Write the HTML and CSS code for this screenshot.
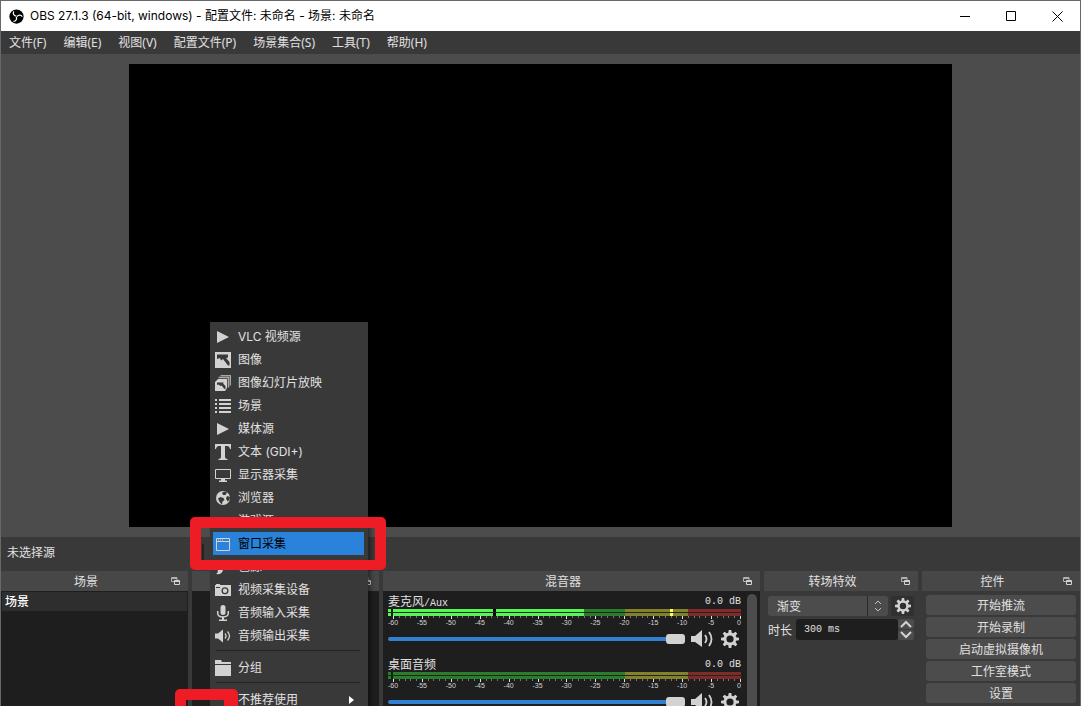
FILE: index.html
```html
<!DOCTYPE html>
<html lang="zh-CN">
<head>
<meta charset="utf-8">
<title>OBS 27.1.3</title>
<link rel="stylesheet" href="styles.css">
</head>
<body>
<svg class="defs" aria-hidden="true">
  <symbol id="i-float" viewBox="0 0 9 9"><path d="M.5.5h5.500v4h-5.500z M.5 1.500h5.500" fill="none" stroke="#b0b0b0"/><path d="M3.500 3.500h5v4h-5z" fill="#474747" stroke="#d2d2d2"/><path d="M3.500 4.500h5" stroke="#d2d2d2"/></symbol>
  <symbol id="i-play" viewBox="0 0 16 16"><path d="M2 2 14 8 2 14z"/></symbol>
  <symbol id="i-image" viewBox="0 0 16 16"><path fill-rule="evenodd" d="M0 0h16v16H0zM2 2.500V7l3-1 1 2.500 2-1.500 5 6.500h1.500V10L11 6l2-.5V2.500z"/></symbol>
  <symbol id="i-slides" viewBox="0 0 16 16"><path d="M5.500.5h10v10M3.500 2.500h10v10" fill="none" stroke="#a8a8a8" stroke-width="1.500"/><path fill-rule="evenodd" d="M3 4h9v9l-2 3H0V7zM2 7.500V10l2-.5 1 1.500 1.500-.5 3 3.500h1V11L8 8.500l1-1z"/></symbol>
  <symbol id="i-list" viewBox="0 0 16 16"><path d="M0 1h2v2H0zM4 1h12v2H4zM0 5h2v2H0zM4 5h12v2H4zM0 9h2v2H0zM4 9h12v2H4zM0 13h2v2H0zM4 13h12v2H4z"/></symbol>
  <symbol id="i-text" viewBox="0 0 16 16"><path d="M0 0h16v5h-1q-.5-3-3-3h-2v11q0 2 2.500 2v1h-9v-1Q6 15 6 13V2H4Q1.500 2 1 5H0z"/></symbol>
  <symbol id="i-monitor" viewBox="0 0 16 16"><path d="M.5 2.500h15v9H.5z" fill="none" stroke="#d2d2d2"/><path d="M6 12h4v1.500h2V15H4v-1.500h2z"/></symbol>
  <symbol id="i-globe" viewBox="0 0 16 16"><circle cx="8" cy="8" r="7"/><path d="m7 2.500 3-1 2 1-1.500 2.500L8 5zM5.500 7l3 1 1 2-2 1.500L7 14.500 4.500 12 3 8.500zM12 6l3 1-.5 3-2 1.500-1.500-3z" fill="#3a393a"/></symbol>
  <symbol id="i-game" viewBox="0 0 16 16"><path d="M4 6h8q3 0 3 5t-4 1H5q-4 4-4-1t3-5z"/></symbol>
  <symbol id="i-window" viewBox="0 0 16 16"><path d="M1.500 2.500h13v12h-13zM1.500 5.500h13" fill="none" stroke="#d2d2d2"/><path d="M3 4h1M5 4h1M7 4h1" stroke="#d2d2d2"/></symbol>
  <symbol id="i-brush" viewBox="0 0 16 16"><path d="m15 1-9 7 2 2zM5 9l3 2q-1 5-7 4 2-1 2-4z"/></symbol>
  <symbol id="i-camera" viewBox="0 0 16 16"><path fill-rule="evenodd" d="M0 3h1V2h4v1h11v11H0zM1 5v1h4V5zm9 .2a3.500 3.500 0 1 0 0 7 3.500 3.500 0 0 0 0-7zm0 1.300a2.200 2.200 0 1 1 0 4.400 2.200 2.200 0 0 1 0-4.400z"/></symbol>
  <symbol id="i-mic" viewBox="0 0 16 16"><rect x="5.500" y="0" width="5" height="10" rx="2.500"/><path d="M2.700 6v2q0 4 5.300 4t5.300-4V6" fill="none" stroke="#d2d2d2" stroke-width="1.500"/><path d="M7 12h2v2.500h3V16H4v-1.500h3z"/></symbol>
  <symbol id="i-sound" viewBox="0 0 16 16"><path d="M0 5.500h3l5-4v13l-5-4H0z"/><path d="M10 5.500q2 2.500 0 5M12.500 3.500q4 4.500 0 9" fill="none" stroke="#d2d2d2" stroke-width="1.300"/></symbol>
  <symbol id="i-folder" viewBox="0 0 16 16"><path d="M0 0h6l1 2h9v2H0zM0 5h16v11H0z"/></symbol>
  <symbol id="i-speaker" viewBox="0 0 22 18"><path d="M0 6h4l7-6v17l-7-5H0z"/><path d="M14 5q3 4 0 8M18 2q5 7 0 14" fill="none" stroke="#d2d2d2" stroke-width="1.800"/></symbol>
  <symbol id="i-gear" viewBox="0 0 18 18"><circle cx="9" cy="9" r="5" fill="none" stroke="#d2d2d2" stroke-width="2.800"/><path d="M7.700 0h2.600l.5 3.500H7.200zM7.700 18h2.600l.5-3.500H7.200zM0 7.700v2.600l3.500.5V7.200zM18 7.700v2.600l-3.500.5V7.200z"/><path transform="rotate(45 9 9)" d="M7.700 0h2.600l.5 3.500H7.200zM7.700 18h2.600l.5-3.500H7.200zM0 7.700v2.600l3.500.5V7.200zM18 7.700v2.600l-3.500.5V7.200z"/></symbol>
</svg>

<div class="window">
  <header class="titlebar">
    <svg class="logo" viewBox="0 0 16 16"><circle cx="8" cy="8" r="7.600"/><g fill="none" stroke="#fff" stroke-width="1.300"><path d="M5 2.500q-1.500 4 2.800 5.200"/><path d="M5 2.500q-1.500 4 2.800 5.200" transform="rotate(120 8 8)"/><path d="M5 2.500q-1.500 4 2.800 5.200" transform="rotate(240 8 8)"/></g></svg>
    <h1>OBS 27.1.3 (64-bit, windows) - 配置文件: 未命名 - 场景: 未命名</h1>
    <button class="winbtn" aria-label="最小化"><svg viewBox="0 0 11 11"><path d="M0 5.500h10"/></svg></button>
    <button class="winbtn" aria-label="最大化"><svg viewBox="0 0 11 11"><path d="M.5.5h9v9h-9z"/></svg></button>
    <button class="winbtn" aria-label="关闭"><svg viewBox="0 0 11 11"><path d="m.5.5 10 10m0-10-10 10"/></svg></button>
  </header>
  <nav class="menubar">
    <button>文件(F)</button><button>编辑(E)</button><button>视图(V)</button><button>配置文件(P)</button><button>场景集合(S)</button><button>工具(T)</button><button>帮助(H)</button>
  </nav>
  <main class="preview"><div class="canvas"></div></main>
  <div class="context"><span>未选择源</span><i class="divider"></i></div>

  <div class="docks">
    <section class="dock">
      <div class="dockhead"><h2>场景</h2><button aria-label="浮动"><svg><use href="#i-float"/></svg></button></div>
      <ul class="dark scenes"><li>场景</li></ul>
    </section>
    <section class="dock">
      <div class="dockhead"><h2></h2><button aria-label="浮动"><svg><use href="#i-float"/></svg></button></div>
      <div class="dark"></div>
    </section>
    <section class="dock">
      <div class="dockhead"><h2>混音器</h2><button aria-label="浮动"><svg><use href="#i-float"/></svg></button></div>
      <div class="dark mixer">
        <div class="channels">
          <div class="channel">
            <div class="chanhead"><label for="mic">麦克风<span class="mono">/Aux</span></label><span class="mono">0.0 dB</span></div>
            <svg class="meter" data-level="active"></svg>
            <div class="chanctl"><input type="range" id="mic" value="100"><button aria-label="静音"><svg class="speaker"><use href="#i-speaker"/></svg></button><button aria-label="设置"><svg class="gear"><use href="#i-gear"/></svg></button></div>
          </div>
          <div class="channel">
            <div class="chanhead"><label for="desk">桌面音频</label><span class="mono">0.0 dB</span></div>
            <svg class="meter" data-level="idle"></svg>
            <div class="chanctl"><input type="range" id="desk" value="100"><button aria-label="静音"><svg class="speaker"><use href="#i-speaker"/></svg></button><button aria-label="设置"><svg class="gear"><use href="#i-gear"/></svg></button></div>
          </div>
        </div>
        <div class="scroll"></div>
      </div>
    </section>
    <section class="dock">
      <div class="dockhead"><h2>转场特效</h2><button aria-label="浮动"><svg><use href="#i-float"/></svg></button></div>
      <div class="transitions">
        <div class="row">
          <div class="selectbox"><select aria-label="转场特效"><option>渐变</option></select><svg viewBox="0 0 20 20"><path d="m7 8 3-3 3 3m-6 4 3 3 3-3"/></svg></div>
          <button class="gearbtn" aria-label="转场设置"><svg class="gear"><use href="#i-gear"/></svg></button>
        </div>
        <div class="row duration">
          <label for="dur">时长</label><input id="dur" class="mono" type="text" value="300 ms">
          <div class="spin"><button aria-label="增加"><svg viewBox="0 0 16 10"><path d="m3 8 5-5 5 5"/></svg></button><button aria-label="减少"><svg viewBox="0 0 16 10"><path d="m3 2 5 5 5-5"/></svg></button></div>
        </div>
      </div>
    </section>
    <section class="dock">
      <div class="dockhead"><h2>控件</h2><button aria-label="浮动"><svg><use href="#i-float"/></svg></button></div>
      <div class="controls"><button>开始推流</button><button>开始录制</button><button>启动虚拟摄像机</button><button>工作室模式</button><button>设置</button></div>
    </section>
  </div>

  <div class="popup" role="menu">
    <button role="menuitem"><svg><use href="#i-play"/></svg>VLC 视频源</button>
    <button role="menuitem"><svg><use href="#i-image"/></svg>图像</button>
    <button role="menuitem"><svg><use href="#i-slides"/></svg>图像幻灯片放映</button>
    <button role="menuitem"><svg><use href="#i-list"/></svg>场景</button>
    <button role="menuitem"><svg><use href="#i-play"/></svg>媒体源</button>
    <button role="menuitem"><svg><use href="#i-text"/></svg>文本 (GDI+)</button>
    <button role="menuitem"><svg><use href="#i-monitor"/></svg>显示器采集</button>
    <button role="menuitem"><svg><use href="#i-globe"/></svg>浏览器</button>
    <button role="menuitem"><svg><use href="#i-game"/></svg>游戏源</button>
    <button role="menuitem" class="active"><svg><use href="#i-window"/></svg>窗口采集</button>
    <button role="menuitem"><svg><use href="#i-brush"/></svg>色源</button>
    <button role="menuitem"><svg><use href="#i-camera"/></svg>视频采集设备</button>
    <button role="menuitem"><svg><use href="#i-mic"/></svg>音频输入采集</button>
    <button role="menuitem"><svg><use href="#i-sound"/></svg>音频输出采集</button>
    <hr>
    <button role="menuitem"><svg><use href="#i-folder"/></svg>分组</button>
    <hr>
    <button role="menuitem"><svg></svg>不推荐使用<svg class="arrow" viewBox="0 0 5 8"><path d="M0 0 5 4 0 8z"/></svg></button>
  </div>
  <div class="mark mark-item"></div>
  <div class="mark mark-add"></div>
</div>
<script src="meter.js"></script>
</body>
</html>
```
FILE: styles.css
```css
* { box-sizing: border-box; margin: 0; padding: 0; }
html, body { height: 100%; overflow: hidden; }
body { font: 12px/16px Inter, "Noto Sans CJK SC", sans-serif; color: #e1e0e1; background: #3a393a; }
button, input, select { font: inherit; color: inherit; background: none; border: 0; }
h1, h2 { font-size: 12px; font-weight: 400; }
svg { fill: #d2d2d2; display: block; flex: none; }
.defs { position: absolute; width: 0; height: 0; }
.mono { font: 10px/16px "Liberation Mono", "Noto Sans CJK SC", monospace; }

.window { position: relative; height: 100vh; overflow: hidden; display: flex; flex-direction: column; border: solid #686868; border-width: 1px 1px 0; }
.titlebar { display: flex; align-items: center; height: 30px; flex: none; padding-left: 8px; background: #fff; color: #000; }
.titlebar h1 { flex: 1; margin-left: 6px; }
.logo { width: 15px; height: 15px; fill: #000; }
.winbtn { width: 46px; height: 30px; display: grid; place-items: center; }
.winbtn svg { width: 11px; height: 11px; fill: none; stroke: #000; }
.menubar { display: flex; flex: none; gap: 1px; height: 23px; background: #3a393a; font-family: "Noto Sans", "Noto Sans CJK SC", sans-serif; }
.menubar button { padding: 1px 8px 0; }
.preview { flex: 1; min-height: 0; padding: 10px; background: #4c4c4c; display: flex; justify-content: center; }
.canvas { height: 100%; aspect-ratio: 16 / 9; background: #000; }
.context { display: flex; flex: none; align-items: center; height: 34px; padding-left: 6px; }
.context span { width: 195px; padding-bottom: 2px; }
.divider { width: 2px; height: 20px; background: #242324; }

.docks { flex: none; height: 135px; display: grid; grid-template-columns: 187fr 187fr 377fr 154fr 158fr; gap: 4px; }
.dock { min-width: 0; display: flex; flex-direction: column; overflow: hidden; }
.dockhead { display: flex; align-items: center; flex: none; height: 20px; background: #474747; }
.dockhead h2 { flex: 1; padding-top: 2px; text-align: center; }
.dockhead button { width: 17px; }
.dockhead svg { width: 9px; height: 9px; }
.dark { flex: 1; min-height: 0; background: #1f1e1f; }
.scenes { list-style: none; padding: 1px; }
.scenes li { height: 19px; line-height: 19px; padding-left: 3px; background: #2e2e2e; color: #fff; font-weight: 500; }

.mixer { display: flex; padding: 2px 3px 0 5px; }
.channels { flex: 1; min-width: 0; }
.channel { height: 63px; }
.chanhead { display: flex; justify-content: space-between; height: 16px; line-height: 18px; }
.chanhead .mono { line-height: 18px; }
.meter { width: 100%; height: 19px; overflow: visible; font: 7px "Liberation Sans", sans-serif; }
.chanctl { display: flex; align-items: center; height: 22px; gap: 6px; }
.chanctl input { flex: 1; min-width: 0; height: 10px; appearance: none; }
.chanctl input::-webkit-slider-runnable-track { height: 4px; border-radius: 2px; background: #3280d0; }
.chanctl input::-webkit-slider-thumb { appearance: none; width: 19px; height: 10px; margin-top: -3px; border-radius: 3px; background: #d2d2d2; }
.chanctl button + button { padding: 0 2px; }
.speaker { width: 22px; height: 18px; }
.gear { width: 18px; height: 18px; }
.scroll { flex: none; width: 10px; margin: 1px 0 0 6px; background: #4c4c4c; border-radius: 5px 5px 0 0; }

.transitions { padding: 5px 4px; display: grid; grid-template-columns: minmax(0, 1fr); gap: 3px; }
.row { display: flex; gap: 3px; height: 20px; }
.selectbox { flex: 1; min-width: 0; display: flex; background: #4c4c4c; border-radius: 3px; }
.selectbox select { flex: 1; min-width: 0; appearance: none; padding: 2px 0 0 9px; border-right: 1px solid #2b2b2b; }
.selectbox svg { width: 20px; height: 20px; fill: none; stroke: #c0c0c0; }
.gearbtn { width: 23px; display: grid; place-items: center; background: #313031; border-radius: 3px; }
.gearbtn .gear { width: 16px; height: 16px; }
.duration { gap: 0; height: 21px; }
.duration label { width: 28px; line-height: 23px; }
.duration input { flex: 1; min-width: 0; padding: 1px 0 0 8px; background: #1f1e1f; border-radius: 3px; }
.spin { flex: none; width: 16px; display: grid; gap: 1px; }
.spin button { height: 10px; background: #4c4c4c; border-radius: 2px; }
.spin svg { width: 16px; height: 10px; fill: none; stroke: #d2d2d2; stroke-width: 2; }
.controls { display: grid; gap: 2px; padding: 4px; }
.controls button { height: 20px; padding-top: 2px; background: #4c4c4c; border-radius: 3px; }

.popup { position: absolute; left: 209px; top: 321px; width: 158px; padding: 3px; background: #3a393a; box-shadow: 3px 3px 4px rgba(0, 0, 0, .4); }
.popup button { display: flex; align-items: center; gap: 7px; width: 151px; height: 23px; padding-left: 2px; }
.popup svg { width: 16px; height: 16px; }
.popup .active { background: #2a82da; color: #000; }
.popup hr { border: 0; height: 1px; margin: 3px 5px 5px 3px; background: #252425; }
.popup .arrow { width: 5px; height: 8px; margin: 0 10px 0 auto; fill: #fff; }
.mark { position: absolute; border: 11px solid #ee1c24; border-radius: 5px; }
.mark-item { left: 189px; top: 516px; width: 196px; height: 53px; border-bottom-width: 10px; }
.mark-add { left: 174px; top: 688px; width: 63px; height: 60px; border-right-width: 14px; }
```
FILE: meter.js
```js
const NS = "http://www.w3.org/2000/svg";
const WIDTH = 353;

function add(svg, name, attrs, text) {
  const el = document.createElementNS(NS, name);
  for (const key in attrs) el.setAttribute(key, attrs[key]);
  if (text) el.textContent = text;
  svg.append(el);
}

function bar(svg, from, to, fill) {
  add(svg, "rect", { x: from / WIDTH * 100 + "%", y: 0, width: (to - from) / WIDTH * 100 + "%", height: 7, fill });
}

for (const svg of document.querySelectorAll(".meter")) {
  svg.setAttribute("shape-rendering", "crispEdges");
  bar(svg, 0, 237, "#2b7d2b");
  bar(svg, 237, 300, "#84802b");
  bar(svg, 300, 353, "#802a2c");
  if (svg.dataset.level === "active") {
    bar(svg, 0, 196, "#55f655");
    bar(svg, 105, 108, "#000");
    bar(svg, 282, 285, "#ffff50");
  }
  bar(svg, 3, 5, "#102010");
  add(svg, "rect", { x: 0, y: 3, width: "100%", height: 1, fill: "#1a2a1a" });
  for (let db = -60; db <= 0; db++) {
    const major = db % 5 === 0;
    const x = (5 + (db + 60) * 5.783) / WIDTH * 100 + "%";
    add(svg, "rect", { x, y: 7, width: 1, height: major ? 3 : 2, fill: major ? "#e0e0e0" : "#777" });
    if (major) add(svg, "text", { x: db ? x : "100%", y: 16, "text-anchor": db ? "middle" : "end" }, String(db));
  }
}
```
